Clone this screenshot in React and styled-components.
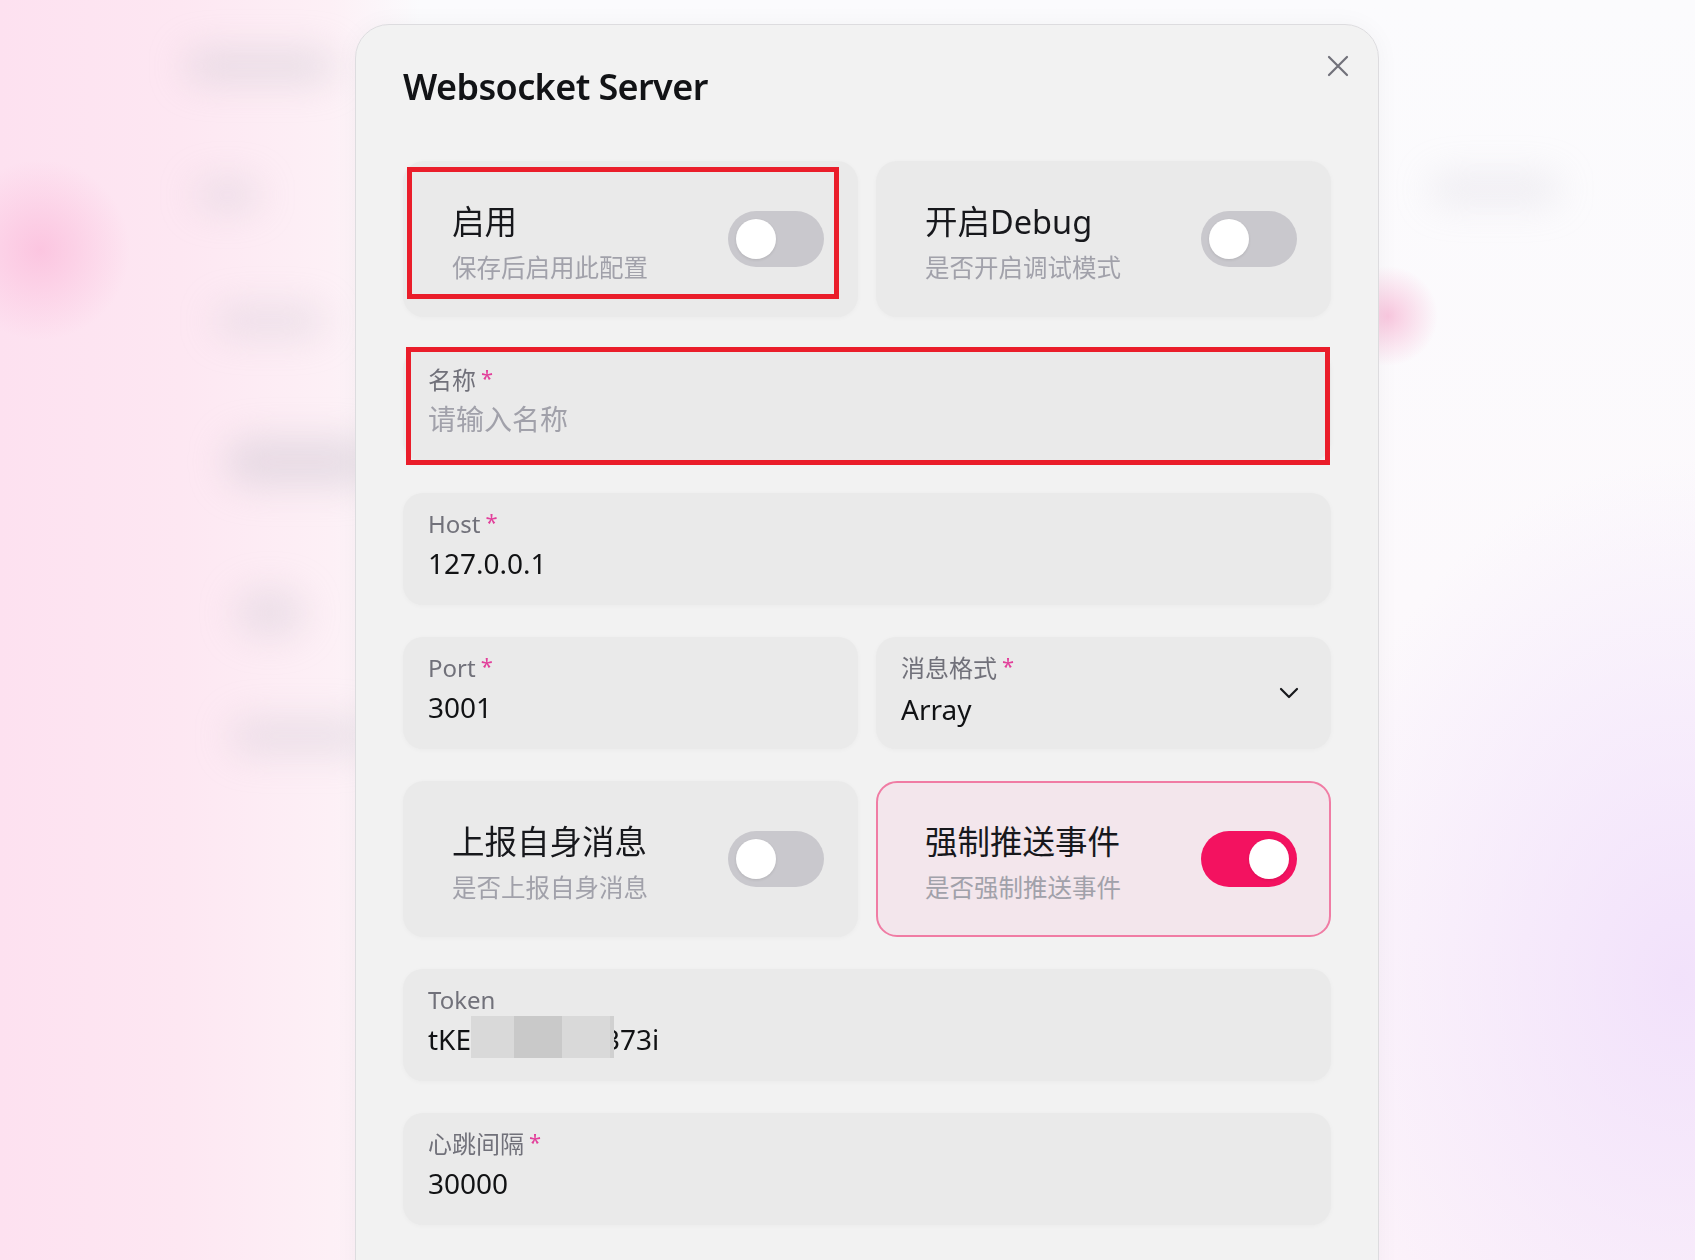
import React from "react";
import styled, { createGlobalStyle } from "styled-components";

const GlobalStyle = createGlobalStyle`
  html, body {
    margin: 0;
    height: 1260px;
    overflow: hidden;
  }
  body {
    font-family: "Noto Sans", "Noto Sans CJK SC", sans-serif;
    color: #11181c;
    background: #fcfbfd;
  }
  * {
    box-sizing: border-box;
  }
`;

const Backdrop = styled.div`
  position: fixed;
  inset: 0;
  z-index: 0;
  overflow: hidden;
  background:
    radial-gradient(circle at 40px 250px, rgba(251, 190, 220, 0.8), rgba(251, 190, 220, 0) 90px),
    radial-gradient(circle at 1388px 316px, rgba(247, 182, 212, 0.75), rgba(247, 182, 212, 0) 50px),
    radial-gradient(ellipse 380px 520px at 1680px 980px, rgba(240, 222, 251, 0.85), rgba(240, 222, 251, 0)),
    linear-gradient(90deg, #fde1f0 0px, #fde7f2 180px, #fdf0f6 330px, rgba(253, 245, 250, 0) 420px),
    linear-gradient(180deg, #fbfbfd 0px, #fcf9fc 600px, #fcf3fa 1260px);
`;

const Blob = styled.div`
  position: absolute;
  left: ${(p) => p.$x}px;
  top: ${(p) => p.$y}px;
  width: ${(p) => p.$w}px;
  height: ${(p) => p.$h}px;
  border-radius: 40px;
  background: rgba(200, 194, 206, ${(p) => p.$a || 0.32});
  filter: blur(18px);
`;

const Page = styled.div`
  position: relative;
  z-index: 1;
  padding: 24px 0 0 355px;
`;

const Modal = styled.section`
  position: relative;
  width: 1024px;
  min-height: 1300px;
  padding: 38px 47px 60px;
  background: #f2f2f2;
  border: 1px solid #dddcdf;
  border-radius: 34px;
  box-shadow: 0 0 24px rgba(0, 0, 0, 0.04);
`;

const CloseButton = styled.button`
  position: absolute;
  top: 30px;
  right: 29px;
  width: 22px;
  height: 22px;
  padding: 0;
  border: none;
  background: transparent;
  color: #71717a;
  display: flex;
  align-items: center;
  justify-content: center;
  cursor: pointer;
`;

const Title = styled.h2`
  margin: 0;
  font-size: 36px;
  line-height: 48px;
  font-weight: 600;
  letter-spacing: -0.6px;
  color: #121316;
`;

const Form = styled.div`
  display: flex;
  flex-direction: column;
  gap: 32px;
  margin-top: 50px;
`;

const Row = styled.div`
  display: grid;
  grid-template-columns: 1fr 1fr;
  gap: 18px;
`;

const SwitchCard = styled.div`
  position: relative;
  height: 156px;
  display: flex;
  align-items: center;
  justify-content: space-between;
  padding: 0 32px 0 47px;
  border-radius: 21px;
  border: 2px solid ${(p) => (p.$on ? "#f07ca4" : "transparent")};
  background: ${(p) => (p.$on ? "#f3e6ec" : "#eaeaea")};
  box-shadow: ${(p) => (p.$on ? "none" : "0 1px 5px rgba(0, 0, 0, 0.03)")};
`;

const SwitchText = styled.div`
  display: flex;
  flex-direction: column;
  gap: 7px;
  padding-top: 6px;
`;

const SwitchTitle = styled.div`
  font-size: 32.5px;
  line-height: 44px;
  color: #17181c;
`;

const SwitchHint = styled.div`
  font-size: 24.5px;
  line-height: 34px;
  color: #a1a1aa;
`;

const Track = styled.span`
  width: 96px;
  height: 56px;
  flex-shrink: 0;
  padding: 8px;
  border-radius: 28px;
  display: flex;
  justify-content: ${(p) => (p.$on ? "flex-end" : "flex-start")};
  background: ${(p) => (p.$on ? "#f31260" : "#c9c8cd")};
`;

const Thumb = styled.span`
  width: 40px;
  height: 40px;
  border-radius: 50%;
  background: #fff;
  box-shadow: 0 1px 3px rgba(0, 0, 0, 0.1);
`;

const Field = styled.div`
  position: relative;
  height: 112px;
  padding: 15px 25px 0;
  border-radius: 20px;
  background: #eaeaea;
  box-shadow: 0 1px 5px rgba(0, 0, 0, 0.03);
  display: flex;
  align-items: flex-start;
  justify-content: space-between;
`;

const FieldBody = styled.div`
  display: flex;
  flex-direction: column;
`;

const Label = styled.label`
  font-size: 24px;
  line-height: 32px;
  color: #71717a;
  display: flex;
  align-items: flex-start;
`;

const Required = styled.span`
  margin-left: 5px;
  font-size: 22px;
  line-height: 26px;
  color: #e2409b;
`;

const Value = styled.div`
  position: relative;
  margin-top: ${(p) => (p.$select ? 7 : 5)}px;
  font-size: 28px;
  line-height: 36px;
  color: ${(p) => (p.$placeholder ? "#a1a1aa" : "#111214")};
  white-space: nowrap;
`;

const Hidden = styled.span`
  display: inline-block;
  width: 133px;
`;

const Mosaic = styled.span`
  position: absolute;
  left: 43px;
  top: -5px;
  height: 42px;
  display: flex;
`;

const Tile = styled.span`
  width: ${(p) => p.$w}px;
  height: 100%;
  background: ${(p) => p.$c};
`;

const Chevron = styled.span`
  align-self: center;
  margin-top: -15px;
  margin-right: 7px;
  display: flex;
  color: #17181c;
`;

const Mark = styled.div`
  position: absolute;
  top: ${(p) => p.$t}px;
  left: ${(p) => p.$l}px;
  right: ${(p) => p.$r}px;
  bottom: ${(p) => p.$b}px;
  border: 5px solid #ea1d2a;
  pointer-events: none;
`;

const Toggle = ({ on }) => (
  <Track $on={on}>
    <Thumb />
  </Track>
);

const SwitchItem = ({ title, hint, on, mark }) => (
  <SwitchCard $on={on}>
    <SwitchText>
      <SwitchTitle>{title}</SwitchTitle>
      <SwitchHint>{hint}</SwitchHint>
    </SwitchText>
    <Toggle on={on} />
    {mark && <Mark $t={4} $l={2} $r={17} $b={16} />}
  </SwitchCard>
);

const InputField = ({ label, required, value, placeholder, select, children, mark }) => (
  <Field>
    <FieldBody>
      <Label>
        {label}
        {required && <Required>*</Required>}
      </Label>
      <Value $placeholder={!value && !children} $select={select}>
        {children || value || placeholder}
      </Value>
    </FieldBody>
    {select && (
      <Chevron>
        <svg width="20" height="12" viewBox="0 0 20 12" fill="none">
          <path d="M2 2l8 8 8-8" stroke="currentColor" strokeWidth="2.2" strokeLinecap="round" strokeLinejoin="round" />
        </svg>
      </Chevron>
    )}
    {mark && <Mark $t={-2} $l={3} $r={1} $b={-4} />}
  </Field>
);

const blobs = [
  { x: 185, y: 50, w: 150, h: 32, a: 0.4 },
  { x: 195, y: 180, w: 65, h: 30 },
  { x: 215, y: 306, w: 110, h: 30 },
  { x: 225, y: 438, w: 150, h: 48, a: 0.42 },
  { x: 235, y: 590, w: 70, h: 46 },
  { x: 230, y: 718, w: 140, h: 36 },
  { x: 1430, y: 174, w: 130, h: 30, a: 0.25 },
];

export default function App() {
  return (
    <>
      <GlobalStyle />
      <Backdrop>
        {blobs.map((b, i) => (
          <Blob key={i} $x={b.x} $y={b.y} $w={b.w} $h={b.h} $a={b.a} />
        ))}
      </Backdrop>
      <Page>
        <Modal>
          <CloseButton aria-label="close">
            <svg width="22" height="22" viewBox="0 0 22 22" fill="none">
              <path d="M2 2l18 18M20 2L2 20" stroke="currentColor" strokeWidth="2.2" strokeLinecap="round" />
            </svg>
          </CloseButton>
          <Title>Websocket Server</Title>
          <Form>
            <Row>
              <SwitchItem title="启用" hint="保存后启用此配置" mark />
              <SwitchItem title="开启Debug" hint="是否开启调试模式" />
            </Row>
            <InputField label="名称" required placeholder="请输入名称" mark />
            <InputField label="Host" required value="127.0.0.1" />
            <Row>
              <InputField label="Port" required value="3001" />
              <InputField label="消息格式" required value="Array" select />
            </Row>
            <Row>
              <SwitchItem title="上报自身消息" hint="是否上报自身消息" />
              <SwitchItem title="强制推送事件" hint="是否强制推送事件" on />
            </Row>
            <InputField label="Token">
              tKE
              <Hidden />
              373i
              <Mosaic>
                <Tile $w={43} $c="#d9d9d9" />
                <Tile $w={48} $c="#c9c9c9" />
                <Tile $w={48} $c="#d9d9d9" />
                <Tile $w={4} $c="#d0d0d0" />
              </Mosaic>
            </InputField>
            <InputField label="心跳间隔" required value="30000" />
          </Form>
        </Modal>
      </Page>
    </>
  );
}
